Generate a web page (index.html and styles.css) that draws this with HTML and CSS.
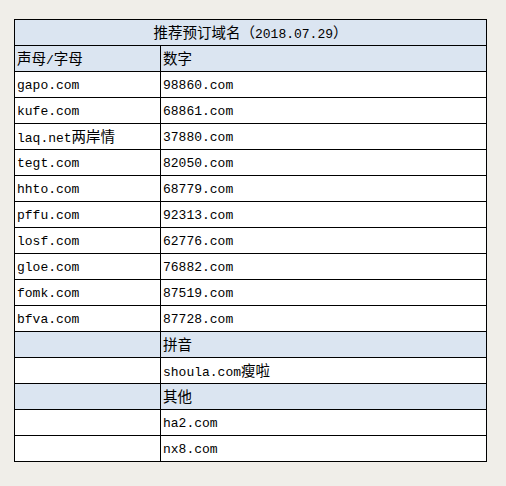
FILE: index.html
```html
<!DOCTYPE html>
<html>
<head>
<meta charset="utf-8">
<link rel="stylesheet" href="styles.css">
</head>
<body>
<table class="grid">
  <colgroup><col class="c1"><col class="c2"></colgroup>
  <tr class="hd"><td colspan="2" class="title"><span class="cjk">推荐预订域名（</span>2018.07.29<span class="cjk">）</span></td></tr>
  <tr class="hd"><td><span class="cjk">声母</span>/<span class="cjk">字母</span></td><td><span class="cjk">数字</span></td></tr>
  <tr><td>gapo.com</td><td>98860.com</td></tr>
  <tr><td>kufe.com</td><td>68861.com</td></tr>
  <tr><td>laq.net<span class="cjk">两岸情</span></td><td>37880.com</td></tr>
  <tr><td>tegt.com</td><td>82050.com</td></tr>
  <tr><td>hhto.com</td><td>68779.com</td></tr>
  <tr><td>pffu.com</td><td>92313.com</td></tr>
  <tr><td>losf.com</td><td>62776.com</td></tr>
  <tr><td>gloe.com</td><td>76882.com</td></tr>
  <tr><td>fomk.com</td><td>87519.com</td></tr>
  <tr><td>bfva.com</td><td>87728.com</td></tr>
  <tr class="hd"><td></td><td><span class="cjk">拼音</span></td></tr>
  <tr><td></td><td>shoula.com<span class="cjk">瘦啦</span></td></tr>
  <tr class="hd"><td></td><td><span class="cjk">其他</span></td></tr>
  <tr><td></td><td>ha2.com</td></tr>
  <tr><td></td><td>nx8.com</td></tr>
</table>
</body>
</html>
```
FILE: styles.css
```css
html, body {
  margin: 0;
  padding: 0;
  background: #f0eee9;
  width: 506px;
  height: 486px;
  overflow: hidden;
}
body {
  padding: 19px 0 0 14px;
  box-sizing: border-box;
}
.grid {
  border-collapse: collapse;
  table-layout: fixed;
  width: 472px;
  font-family: "Liberation Mono", "Noto Sans CJK SC", monospace;
  font-size: 13px;
  color: #000;
  background: #fff;
}
.c1 { width: 146px; }
.c2 { width: 326px; }
.grid td {
  border: 1px solid #000;
  height: 26px;
  padding: 2px 2px 0 2px;
  box-sizing: border-box;
  white-space: nowrap;
  overflow: hidden;
  vertical-align: middle;
  line-height: 20px;
}
.cjk {
  font-family: "Noto Sans CJK SC", sans-serif;
  font-size: 14.5px;
}
.grid tr.hd td { background: #dbe5f1; }
.grid td.title { text-align: center; }
```
